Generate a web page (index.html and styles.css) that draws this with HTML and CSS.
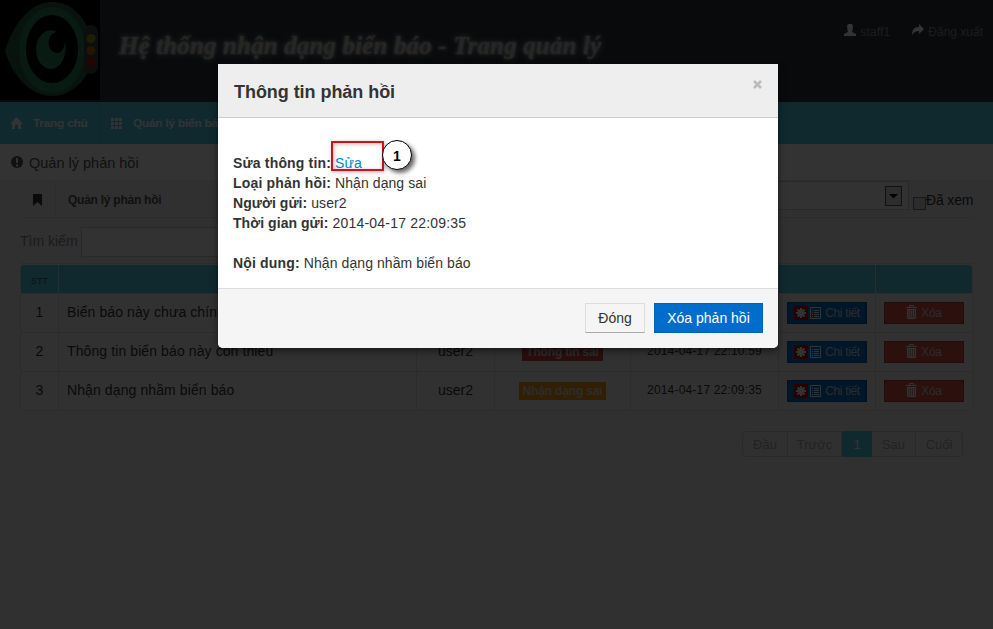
FILE: index.html
```
<!DOCTYPE html>
<html lang="vi">
<head>
<meta charset="utf-8">
<title>Quản lý phản hồi</title>
<link rel="stylesheet" href="styles.css">
</head>
<body>
<svg class="defs" aria-hidden="true">
  <symbol id="list" viewBox="0 0 11 12"><path fill="none" stroke="currentColor" d="M.5.5h10v11H.5z"/><path stroke="currentColor" d="M2 3.5h1M4 3.5h5M2 5.5h1M4 5.5h5M2 7.5h1M4 7.5h5M2 9.5h1M4 9.5h5"/></symbol>
  <symbol id="star" viewBox="0 0 14 14"><path fill="#c00000" d="M0 0h14v14H0z"/><path stroke="#fff" stroke-width="2.200" d="M7 2v10M2 7h10M3.500 3.500l7 7M10.500 3.500l-7 7"/></symbol>
  <symbol id="trash" viewBox="0 0 11 14"><path fill="none" stroke="currentColor" d="M0 2.500h11M3.500 2V.5h4V2"/><path fill="currentColor" fill-rule="evenodd" d="M1 4h9v9l-1 1H2l-1-1zM2.500 5v8h.7V5zM4.500 5v8h.7V5zM6.300 5v8h.7V5zM8 5v8h.7V5z"/></symbol>
</svg>
<header class="header">
  <svg class="logo" viewBox="0 0 100 100">
    <path fill="#000" d="M0 0h100v100H0z"/>
    <path fill="#2a6248" d="M5 51C12 27 29 2 52 2c23 0 34 20 38 32v34C83 84 69 96 52 96 29 96 12 74 5 51z"/>
    <ellipse cx="52" cy="50" rx="33" ry="43" fill="#2a8058"/>
    <ellipse cx="52" cy="49" rx="26" ry="34" fill="#000"/>
    <path fill="#2a8058" d="M57 32C46 26 36 37 36 49c0 12 7 20 15 20 9 0 17-12 14-29 0 8-3 13-8 13-11-1-11-20 0-21z"/>
    <rect x="84" y="25" width="14" height="49" rx="7" fill="#444"/>
    <circle cx="91" cy="38.500" r="4.500" fill="#969620"/><circle cx="91" cy="50.500" r="4.500" fill="#a86d00"/><circle cx="91" cy="62" r="4.500" fill="#b81515"/>
  </svg>
  <h1>Hệ thống nhận dạng biển báo - Trang quản lý</h1>
  <div class="user">
    <svg viewBox="0 0 12 12"><path fill="currentColor" d="M4 0h4l1 2-.5 4L8 8l4 2v2H0v-2l4-2-.5-2L3 2z"/></svg><span class="name">staff1</span>
    <svg class="share" viewBox="0 0 12 12"><path fill="currentColor" d="M0 11C0 6 2 3 7 3V0l5 5-5 5V7C4 7 2 8 0 11z"/></svg><span class="logout">Đăng xuất</span>
  </div>
</header>
<nav class="nav">
  <a class="home"><svg viewBox="0 0 13 12"><path fill="currentColor" d="M6.500 0L13 7h-2v5H8V8H5v4H2V7H0z"/></svg><span>Trang chủ</span></a>
  <a><svg viewBox="0 0 11 11"><path fill="currentColor" d="M0 0h3v3H0zM4 0h3v3H4zM8 0h3v3H8zM0 4h3v3H0zM4 4h3v3H4zM8 4h3v3H8zM0 8h3v3H0zM4 8h3v3H4zM8 8h3v3H8z"/></svg><span>Quản lý biển báo</span></a>
</nav>
<div class="crumb"><svg viewBox="0 0 12 12"><circle cx="6" cy="6" r="6" fill="#555"/><path stroke="#fff" stroke-width="2" d="M6 2v5M6 8.500v2"/></svg><span>Quản lý phản hồi</span></div>
<main>
  <div class="title">
    <span class="mark"><svg viewBox="0 0 9 12"><path fill="#333" d="M0 0h9v12L4.500 8 0 12z"/></svg></span>
    <h5>Quản lý phản hồi</h5>
    <div class="select"><span class="arrow"></span></div>
    <span class="check"></span><span class="seen">Đã xem</span>
  </div>
  <div class="search"><span>Tìm kiếm</span><span class="input"></span></div>
  <table>
    <colgroup><col class="c1"><col class="c2"><col class="c3"><col class="c4"><col class="c5"><col class="c6"><col class="c7"></colgroup>
    <thead><tr><th>STT</th><th></th><th></th><th></th><th></th><th></th><th></th></tr></thead>
    <tbody>
      <tr><td>1</td><td class="text">Biển báo này chưa chính</td><td></td><td></td><td class="time"></td><td><a class="btn blue"><svg class="star"><use href="#star"/></svg><svg class="list"><use href="#list"/></svg>Chi tiết</a></td><td><a class="btn red"><svg class="trash"><use href="#trash"/></svg>Xóa</a></td></tr>
      <tr><td>2</td><td class="text">Thông tin biển báo này còn thiếu</td><td>user2</td><td><b class="label red">Thông tin sai</b></td><td class="time">2014-04-17 22:10:59</td><td><a class="btn blue"><svg class="star"><use href="#star"/></svg><svg class="list"><use href="#list"/></svg>Chi tiết</a></td><td><a class="btn red"><svg class="trash"><use href="#trash"/></svg>Xóa</a></td></tr>
      <tr><td>3</td><td class="text">Nhận dạng nhầm biển báo</td><td>user2</td><td><b class="label orange">Nhận dạng sai</b></td><td class="time">2014-04-17 22:09:35</td><td><a class="btn blue"><svg class="star"><use href="#star"/></svg><svg class="list"><use href="#list"/></svg>Chi tiết</a></td><td><a class="btn red"><svg class="trash"><use href="#trash"/></svg>Xóa</a></td></tr>
    </tbody>
  </table>
  <div class="pages"><a class="p1">Đầu</a><a class="p2">Trước</a><a class="p3">1</a><a class="p4">Sau</a><a class="p5">Cuối</a></div>
</main>
<div class="backdrop"></div>
<section class="modal">
  <div class="modal-head"><h3>Thông tin phản hồi</h3><svg class="close" viewBox="0 0 9 9"><path stroke="#bbb" stroke-width="2.600" d="M1 1l7 7M8 1L1 8"/></svg></div>
  <div class="modal-body">
    <p><b>Sửa thông tin:</b> <a>Sửa</a></p>
    <p><b>Loại phản hồi:</b> Nhận dạng sai</p>
    <p><b>Người gửi:</b> user2</p>
    <p><b>Thời gian gửi:</b> 2014-04-17 22:09:35</p>
    <p class="gap"><b>Nội dung:</b> Nhận dạng nhầm biển báo</p>
  </div>
  <div class="modal-foot"><button>Đóng</button><button class="primary">Xóa phản hồi</button></div>
  <div class="frame"></div>
  <div class="step">1</div>
</section>
</body>
</html>
```
FILE: styles.css
```
* { box-sizing: border-box; }
body { margin: 0; width: 993px; height: 629px; overflow: hidden; background: #f0f0f0; font: 14px/20px "Liberation Sans", Arial, sans-serif; color: #333; }
h1, h3, h5, p { margin: 0; }
svg { display: block; flex: none; }
.defs { position: absolute; width: 0; height: 0; }
.header { display: flex; height: 102px; background: #2e363f; }
.logo { width: 100px; height: 100px; }
.header h1 { flex: 1; margin: 28px 0 0 19px; font: italic bold 25px/36px "Liberation Serif", serif; letter-spacing: .14px; color: rgba(195,192,185,.75); text-shadow: 0 0 5px #d0cdc2, 0 0 2px #b5b2a8; white-space: nowrap; }
.user { display: flex; height: 20px; margin: 21px 10px 0 0; font-size: 12px; color: #8a8a8a; }
.user svg { width: 12px; height: 12px; margin-top: 3px; color: #fff; }
.user span { margin-left: 4px; white-space: nowrap; line-height: 22px; }
.user .name { letter-spacing: .15px; }
.user .share { margin-left: 22px; }
.nav { display: flex; height: 42px; background: #4cccea; }
.nav a { display: flex; align-items: center; padding: 0 10px; color: #fff; font-size: 11.800px; font-weight: bold; }
.nav a + a { border-left: 1px solid #45bddb; }
.nav .home { width: 100px; }
.nav svg { width: 13px; height: 12px; margin-right: 10px; color: #fff; }
.nav a + a svg { width: 11px; height: 11px; margin-right: 11px; }
.nav span { white-space: nowrap; letter-spacing: -.2px; }
.crumb { display: flex; align-items: center; height: 36px; padding-left: 11px; background: #fff; font-size: 14.500px; color: #555; }
.crumb span { padding-top: 2px; }
.crumb svg { width: 12px; height: 12px; margin-right: 6px; }
main { padding: 0 20px; }
.title { display: flex; height: 38px; padding-top: 1px; border-top: 1px solid #e3e3e3; border-bottom: 1px solid #dcdcdc; background: #efefef; }
.mark { flex: none; width: 36px; padding: 12px 0 0 13px; border-right: 1px solid #dcdcdc; }
.mark svg { width: 9px; height: 12px; }
.title h5 { flex: none; width: 646px; padding: 8px 12px; font-size: 12px; letter-spacing: -.25px; color: #555; }
.title .select { flex: none; width: 207px; height: 29px; margin-top: -1px; padding: 4px 6px; border: 1px solid #ccc; background: #fafafa; display: flex; justify-content: flex-end; }
.arrow { width: 17px; height: 20px; padding: 7px 3px; border: 1px solid #555; background: #e2e2e2; }
.arrow::before { content: ""; display: block; border: 4px solid transparent; border-top-color: #000; border-bottom: 0; }
.check { flex: none; width: 13px; height: 13px; margin: 15px 0 0 4px; border: 1px solid #777; background: #ddd; }
.seen { white-space: nowrap; line-height: 36px; letter-spacing: -.15px; }
.search { display: flex; height: 46px; padding-top: 9px; border-bottom: 1px solid #ddd; color: #888; line-height: 29px; }
.search span:first-child { width: 61px; white-space: nowrap; }
.input { width: 206px; height: 30px; border: 1px solid #ccc; background: #fafafa; }
table { table-layout: fixed; width: 953px; margin-top: 1px; border-collapse: separate; border-spacing: 0; background: #f6f6f6; border-right: 1px solid #ddd; border-bottom: 1px solid #ddd; border-radius: 4px; }
.c1 { width: 38px; } .c2 { width: 358px; } .c3 { width: 78px; } .c4 { width: 136px; } .c5 { width: 148px; } .c6 { width: 97px; } .c7 { width: 97px; }
th, td { padding: 0; border-left: 1px solid #ddd; text-align: center; white-space: nowrap; }
th { height: 28px; padding-top: 4px; background: #4cccea; color: #555; font-size: 9px; }
th:first-child { border-radius: 4px 0 0; font-weight: normal; } th:last-child { border-radius: 0 4px 0 0; }
td { height: 39px; border-top: 1px solid #ddd; padding-bottom: 3px; }
td.text { padding-left: 8px; text-align: left; letter-spacing: .1px; }
.time { font-size: 12px; letter-spacing: .18px; }
.label { display: inline-block; height: 18px; padding: 0 4px; font-size: 12px; letter-spacing: -.17px; line-height: 18px; color: #ddd; vertical-align: middle; }
.label.red { background: #d04949; } .label.orange { background: #f89406; }
.btn { display: flex; align-items: center; justify-content: center; width: 80px; height: 22px; margin: 3px 0 0 8px; border: 1px solid #0055a0; color: #d8d8d8; font-size: 12px; letter-spacing: -.35px; line-height: 20px; }
.btn.blue { background: #006dcc; } .btn.red { background: #da4f49; border-color: #ad3833; }
.star { width: 14px; height: 14px; margin-right: 2px; } .list { width: 11px; height: 12px; margin-right: 4px; } .trash { width: 11px; height: 14px; margin: -3px 4px 0 0; } .list, .trash { color: #fff; }
.pages { display: flex; width: 221px; height: 26px; margin: 20px 0 0 722px; border: 1px solid #ccc; border-radius: 4px; color: #aaa; font-size: 13px; line-height: 26px; text-align: center; }
.pages a { border-right: 1px solid #ccc; }
.pages .p1 { width: 45px; } .pages .p2 { width: 54px; } .pages .p3 { width: 30px; height: 26px; margin-top: -1px; background: #4cccea; color: #fff; border: 0; line-height: 28px; } .pages .p4 { width: 44px; } .pages .p5 { width: 46px; border: 0; }
.backdrop { position: absolute; inset: 0; background: rgba(0,0,0,.8); }
.modal { position: absolute; left: 218px; top: 64px; width: 560px; height: 284px; background: #fff; border-radius: 0 0 5px 5px; box-shadow: 0 3px 7px rgba(0,0,0,.5); }
.modal-head { display: flex; justify-content: space-between; height: 54px; padding: 13px 16px 0 16px; border-bottom: 1px solid #ccc; background: #eee; }
.modal h3 { font-size: 18px; line-height: 30px; letter-spacing: -.05px; }
.close { width: 9px; height: 9px; margin-top: 3px; }
.modal-body { height: 170px; padding: 35px 15px; letter-spacing: .08px; }
.modal-body b { letter-spacing: .17px; }
.modal-body p:nth-child(3) b, .modal-body p:nth-child(4) b { letter-spacing: .05px; }
.modal-body p:nth-child(4) { letter-spacing: .2px; }
.modal-body a { color: #08c; }
.modal-body .gap { margin-top: 20px; }
.modal-foot { display: flex; justify-content: flex-end; gap: 9px; height: 60px; padding: 14px 15px; border-top: 1px solid #ddd; border-radius: 0 0 5px 5px; background: #f5f5f5; }
button { width: 60px; height: 30px; padding: 0; border: 1px solid #ddd; border-bottom-color: #aaa; background: #f5f5f5; color: #333; font: inherit; }
button.primary { width: 109px; border-color: #0062b8; background: #006dcc; color: #fff; }
.frame { position: absolute; left: 113px; top: 77px; width: 53px; height: 30px; border: 2px solid #c5161d; box-shadow: 1px 1px 4px rgba(0,0,0,.3), inset 1px 1px 4px rgba(100,0,0,.3); }
.step { position: absolute; left: 164px; top: 76px; width: 30px; height: 30px; border: 1.500px solid #000; border-radius: 50%; background: #fff; box-shadow: 3px 3px 4px rgba(0,0,0,.6); color: #000; font-weight: bold; line-height: 30px; text-align: center; }
```
